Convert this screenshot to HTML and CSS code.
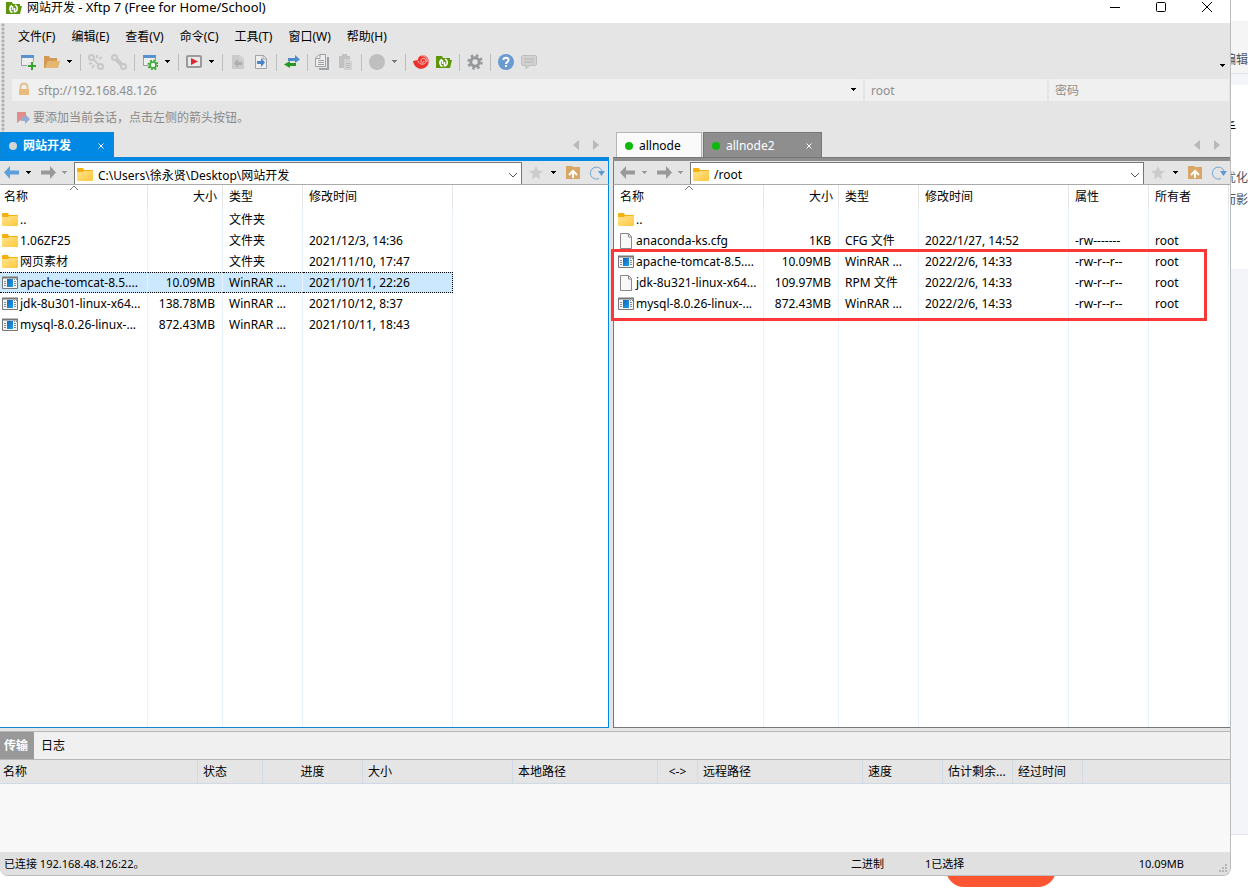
FILE: index.html
```html
<!DOCTYPE html>
<html lang="zh-CN">
<head>
<meta charset="utf-8">
<title>网站开发 - Xftp 7</title>
<link rel="stylesheet" href="styles.css">
</head>
<body>
<svg class="sprite" aria-hidden="true">
  <defs>
    <linearGradient id="gold" x1="0" y1="0" x2="1" y2="1"><stop offset="0" stop-color="#ffe391"/><stop offset="1" stop-color="#ffc83a"/></linearGradient>
    <linearGradient id="azure" x1="0" y1="0" x2="1" y2="1"><stop offset="0" stop-color="#1565b8"/><stop offset="1" stop-color="#1ba0ea"/></linearGradient>
  </defs>
  <symbol id="logo" viewBox="0 0 16 16"><path d="M0 2h6l1 2h7v10H0z" fill="#5e960b"/><path d="M14 6h2l-2 8z" fill="#5e960b"/><path d="M6.500 12.500a3.800 3.800 0 0 1-.5-7M6.500 6v4M9 12a3.800 3.800 0 0 0 0-7M8.500 8v4.500" fill="none" stroke="#fff" stroke-width="1.600"/></symbol>
  <symbol id="caret" viewBox="0 0 7 4"><path d="M1 0h5v1H5v1H4v1H3V2H2V1H1z" fill="currentColor"/></symbol>
  <symbol id="new" viewBox="0 0 16 16"><path d="M.5 1.500h12v10H.5z" fill="#eee" stroke="#999ea3"/><path d="M0 1h13v3H0z" fill="#5794cf"/><path d="M6 8h8v4H6z" fill="#e5e5e5"/><path d="M10 8h2v3h3v2h-3v3h-2v-3H7v-2h3z" fill="#35a52c"/></symbol>
  <symbol id="open" viewBox="0 0 16 16"><path d="M0 2h5l1 2h7v3H4l-2 7H0z" fill="#d29a55"/><path d="M4 7h12l-2 7H1z" fill="#e5b671"/></symbol>
  <symbol id="unlink" viewBox="0 0 16 16"><g fill="none" stroke="#c8c8c8" stroke-width="2"><circle cx="3.500" cy="3.500" r="2.500"/><circle cx="12.500" cy="12.500" r="2.500"/><path d="M5 5l3 3M8 8l3 3M9 1v3M14 3l-3 2M1 10l3-1M4 14l2-3"/></g></symbol>
  <symbol id="link" viewBox="0 0 16 16"><g fill="none" stroke="#c8c8c8" stroke-width="2"><circle cx="3.500" cy="3.500" r="2.500"/><circle cx="12.500" cy="12.500" r="2.500"/><path d="M5 5l6 6" stroke-width="4"/></g></symbol>
  <symbol id="props" viewBox="0 0 16 16"><path d="M1.500 1.500h12v10h-12z" fill="#eee" stroke="#999ea3"/><path d="M1 1h13v3H1z" fill="#5794cf"/><circle cx="11" cy="11" r="4.500" fill="#e9f3e8" stroke="#35a52c" stroke-width="2" stroke-dasharray="1.800 1.730"/><circle cx="11" cy="11" r="3" fill="#f2f8f1" stroke="#35a52c" stroke-width="1.500"/></symbol>
  <symbol id="play" viewBox="0 0 16 16"><rect x="1" y="2" width="14" height="11" rx="1" fill="#e9e9e9" stroke="#9a9a9a" stroke-width="2"/><path d="M5 4l7 3.500L5 11z" fill="#dc2632"/></symbol>
  <symbol id="pageleft" viewBox="0 0 16 16"><path d="M2 1h8l4 4v10H2z" fill="#cbcbcb"/><path d="M10 1v4h4" stroke="#ddd" fill="none"/><path d="M4 9l4-4v3h4v3H8v3z" fill="#adadad"/></symbol>
  <symbol id="pageright" viewBox="0 0 16 16"><path d="M2.500 1.500h8l3 3v10h-11z" fill="#eee" stroke="#a0a4a8"/><path d="M10 1v4h4" fill="none" stroke="#a0a4a8"/><path d="M12 8.500L8 4v3H4v3h4v3z" fill="#4386cb"/></symbol>
  <symbol id="swap" viewBox="0 0 16 16"><path d="M4 4h7V1l5 4.500L11 9V7H4z" fill="#4c8bcc"/><path d="M12 9v3H6v2l-6-3.500L6 7v2z" fill="#249a24"/></symbol>
  <symbol id="copy" viewBox="0 0 16 16"><path d="M4 15h9V3" fill="none" stroke="#9da1a5" stroke-width="2"/><path d="M4.500.5h6v12h-10V4z" fill="#eee" stroke="#9da1a5"/><path d="M1 4.500h4V1M3 6.500h6M3 8.500h6M3 10.500h6" fill="none" stroke="#9da1a5"/></symbol>
  <symbol id="paste" viewBox="0 0 16 16"><path d="M1 2h3V0h5v2h3v12H1z" fill="#c1c1c1"/><path d="M6 5h5l3 3v8H6z" fill="#d2d2d2"/><path d="M8 9.500h4M8 11.500h4M8 13.500h4" stroke="#bbb"/></symbol>
  <symbol id="disc" viewBox="0 0 16 16"><circle cx="8" cy="8" r="8" fill="#bfbfbf"/></symbol>
  <symbol id="shell" viewBox="0 0 16 16"><path d="M0 7l5-1c0-4 4-6 8-4 4 3 3 9 0 11-5 4-12 1-13-6z" fill="#ea332c"/><path d="M5 7c1 4 7 4 8 1 1-4-5-5-5-1 0 2 3 2 3 0M8 2c4-1 7 2 6 6" fill="none" stroke="#ffc9c5"/></symbol>
  <symbol id="gear" viewBox="0 0 16 16"><circle cx="8" cy="8" r="6.500" fill="none" stroke="#96999c" stroke-width="2.500" stroke-dasharray="2.550 2.550"/><circle cx="8" cy="8" r="4.200" fill="#e5e5e5" stroke="#96999c" stroke-width="3"/></symbol>
  <symbol id="help" viewBox="0 0 16 16"><circle cx="8" cy="8" r="8" fill="#699bd1"/><path d="M5.500 6c0-3 5-3 5 0 0 2-2.500 2-2.500 4M8 11v2" fill="none" stroke="#fff" stroke-width="2"/></symbol>
  <symbol id="chat" viewBox="0 0 16 16"><path d="M1.500 1.500h13l1 1v8l-1 1H9l-4 3v-3H1.500l-1-1v-8z" fill="#d1d1d1" stroke="#bdbdbd"/><path d="M3 5h10M3 8h10" stroke="#b5b5b5"/></symbol>
  <symbol id="lock" viewBox="0 0 16 16"><path d="M4.500 7V5a3.500 3.500 0 0 1 7 0v2" fill="none" stroke="#e3bf8d" stroke-width="2"/><rect x="3" y="7" width="10" height="6" rx="1" fill="#e9bb78"/></symbol>
  <symbol id="flag" viewBox="0 0 16 16"><path d="M1 2h9v10l-4-3-5 4z" fill="#df8d8d"/><path d="M5 7h4V4l5 5-5 5v-3H5z" fill="#91afd4"/></symbol>
  <symbol id="back" viewBox="0 0 16 16"><path d="M0 7.500L6 1v4.500h9v4H6V14z" fill="currentColor"/></symbol>
  <symbol id="forward" viewBox="0 0 16 16"><path d="M16 7.500L10 1v4.500H1v4h9V14z" fill="currentColor"/></symbol>
  <symbol id="folder" viewBox="0 0 16 16"><path d="M0 2q0-1 1-1h5l1 2h8q1 0 1 1v2H0z" fill="#f5b20f"/><path d="M0 5h6l1-1h8q1 0 1 1v8q0 1-1 1H1q-1 0-1-1z" fill="url(#gold)"/></symbol>
  <symbol id="archive" viewBox="0 0 16 16"><path d="M.5 2.500h15v11H.5z" fill="#f5f5f5" stroke="#777"/><path d="M0 2.500h16" stroke="#777" stroke-width="2"/><path d="M12 4.500h1M14 4.500h1M2 6.500h2M2 8.500h2M2 10.500h2M12 6.500h2M12 8.500h2M12 10.500h2" stroke="#888"/><path d="M5 4h6v8H5z" fill="url(#azure)"/></symbol>
  <symbol id="file" viewBox="0 0 16 16"><path d="M2.500.5h8l3 3v12h-11z" fill="#f8f8f8" stroke="#888"/><path d="M10.500 1v3h3" fill="none" stroke="#888"/></symbol>
  <symbol id="star" viewBox="0 0 16 16"><path d="M8 1l2 4.500 5 .5-4 3.500 1 5-4-3-4 3 1-5L1 6l5-.5z" fill="#cbcbcb"/></symbol>
  <symbol id="up" viewBox="0 0 16 16"><path d="M1 1h6l1 1h7v12H1z" fill="#d9a765"/><path d="M4 10l4-4 4 4M8 7v6" fill="none" stroke="#fff" stroke-width="2"/></symbol>
  <symbol id="refresh" viewBox="0 0 16 16"><path d="M10 13.500A6 6 0 1 1 13 6" fill="none" stroke="#6da5d8"/><path d="M9 6h7l-3.500 5z" fill="#5b9ad3"/></symbol>
  <symbol id="chevron" viewBox="0 0 10 6"><path d="M1 1l4 4 4-4" fill="none" stroke="#555"/></symbol>
  <symbol id="sort" viewBox="0 0 10 6"><path d="M1 5l4-4 4 4" fill="none" stroke="#777"/></symbol>
  <symbol id="cross" viewBox="0 0 8 8"><path d="M1.500 1.500l5 5M6.500 1.500l-5 5" fill="none" stroke="currentColor"/></symbol>
  <symbol id="tri-left" viewBox="0 0 6 10"><path d="M6 0v10L0 5z" fill="#b9b9b9"/></symbol>
  <symbol id="tri-right" viewBox="0 0 6 10"><path d="M0 0v10l6-5z" fill="#b9b9b9"/></symbol>
</svg>

<div class="desk">
  <div class="backdrop" aria-hidden="true">
    <div class="backdrop-bar">编辑</div>
    <div class="backdrop-band"></div>
    <div class="backdrop-text"><p class="cut">手</p><p class="lead">优化</p><p>而影</p></div>
    <div class="backdrop-card"></div>
    <div class="backdrop-pill"></div>
  </div>

  <main class="window">
    <header class="titlebar">
      <svg class="icon"><use href="#logo"/></svg>
      <h1 class="title">网站开发 <span class="product">- Xftp 7 (Free for Home/School)</span></h1>
      <div class="window-buttons">
        <button class="plain" aria-label="最小化"><svg class="win-icon" viewBox="0 0 12 12"><path d="M1 6.500h10" stroke="#000"/></svg></button>
        <button class="plain" aria-label="最大化"><svg class="win-icon" viewBox="0 0 12 12"><rect x="1.500" y="1.500" width="9" height="9" rx="1" fill="none" stroke="#000"/></svg></button>
        <button class="plain" aria-label="关闭"><svg class="win-icon" viewBox="0 0 12 12"><path d="M1 1l10 10M11 1L1 11" stroke="#000"/></svg></button>
      </div>
    </header>

    <div class="chrome">
      <nav class="menubar">
        <button class="plain">文件(F)</button><button class="plain">编辑(E)</button><button class="plain">查看(V)</button><button class="plain">命令(C)</button><button class="plain">工具(T)</button><button class="plain">窗口(W)</button><button class="plain">帮助(H)</button>
      </nav>
      <div class="toolbar">
        <button class="plain" aria-label="新建"><svg class="icon"><use href="#new"/></svg></button>
        <button class="plain" aria-label="打开"><svg class="icon"><use href="#open"/></svg></button>
        <button class="plain drop" aria-label="打开选项"><svg class="caret"><use href="#caret"/></svg></button>
        <span class="sep"></span>
        <button class="plain" aria-label="断开"><svg class="icon"><use href="#unlink"/></svg></button>
        <button class="plain" aria-label="重新连接"><svg class="icon"><use href="#link"/></svg></button>
        <span class="sep"></span>
        <button class="plain" aria-label="属性"><svg class="icon"><use href="#props"/></svg></button>
        <button class="plain drop" aria-label="属性选项"><svg class="caret"><use href="#caret"/></svg></button>
        <span class="sep"></span>
        <button class="plain" aria-label="运行"><svg class="icon"><use href="#play"/></svg></button>
        <button class="plain drop" aria-label="运行选项"><svg class="caret"><use href="#caret"/></svg></button>
        <span class="sep"></span>
        <button class="plain" aria-label="下载"><svg class="icon"><use href="#pageleft"/></svg></button>
        <button class="plain" aria-label="上传"><svg class="icon"><use href="#pageright"/></svg></button>
        <span class="sep"></span>
        <button class="plain" aria-label="同步"><svg class="icon"><use href="#swap"/></svg></button>
        <span class="sep"></span>
        <button class="plain" aria-label="复制"><svg class="icon"><use href="#copy"/></svg></button>
        <button class="plain" aria-label="粘贴"><svg class="icon"><use href="#paste"/></svg></button>
        <span class="sep"></span>
        <button class="plain" aria-label="编码"><svg class="icon"><use href="#disc"/></svg></button>
        <button class="plain drop muted" aria-label="编码选项"><svg class="caret"><use href="#caret"/></svg></button>
        <span class="sep"></span>
        <button class="plain" aria-label="Xshell"><svg class="icon"><use href="#shell"/></svg></button>
        <button class="plain" aria-label="Xftp"><svg class="icon"><use href="#logo"/></svg></button>
        <span class="sep"></span>
        <button class="plain" aria-label="选项"><svg class="icon"><use href="#gear"/></svg></button>
        <span class="sep"></span>
        <button class="plain" aria-label="帮助"><svg class="icon"><use href="#help"/></svg></button>
        <button class="plain" aria-label="反馈"><svg class="icon"><use href="#chat"/></svg></button>
        <button class="plain overflow" aria-label="更多按钮"><svg class="caret"><use href="#caret"/></svg></button>
      </div>
      <form class="address">
        <div class="field host"><svg class="icon"><use href="#lock"/></svg><input aria-label="主机" value="sftp://192.168.48.126"><button type="button" class="plain" aria-label="历史记录"><svg class="caret"><use href="#caret"/></svg></button></div>
        <div class="field"><input aria-label="用户名" value="root"></div>
        <div class="field"><input aria-label="密码" placeholder="密码"></div>
      </form>
      <div class="hint"><svg class="icon"><use href="#flag"/></svg><span>要添加当前会话，点击左侧的箭头按钮。</span></div>
    </div>

    <div class="panes">
      <section class="pane local">
        <div class="tabs">
          <button class="tab current"><i class="dot"></i><b>网站开发</b><svg class="cross"><use href="#cross"/></svg></button>
          <span class="scrollers"><svg class="tri"><use href="#tri-left"/></svg><svg class="tri"><use href="#tri-right"/></svg></span>
        </div>
        <div class="pathbar">
          <div class="nav">
            <button class="plain blue" aria-label="后退"><svg class="icon"><use href="#back"/></svg></button><button class="plain" aria-label="后退记录"><svg class="caret"><use href="#caret"/></svg></button>
            <button class="plain grey" aria-label="前进"><svg class="icon"><use href="#forward"/></svg></button><button class="plain grey" aria-label="前进记录"><svg class="caret"><use href="#caret"/></svg></button>
          </div>
          <div class="path"><svg class="icon"><use href="#folder"/></svg><input aria-label="本地路径" value="C:\Users\徐永贤\Desktop\网站开发"><svg class="chevron"><use href="#chevron"/></svg></div>
          <div class="path-tools">
            <button class="plain" aria-label="收藏"><svg class="icon"><use href="#star"/></svg></button><button class="plain" aria-label="收藏夹"><svg class="caret"><use href="#caret"/></svg></button>
            <button class="plain" aria-label="上级目录"><svg class="icon"><use href="#up"/></svg></button><button class="plain" aria-label="刷新"><svg class="icon"><use href="#refresh"/></svg></button>
          </div>
        </div>
        <div class="listing">
          <svg class="sort"><use href="#sort"/></svg>
          <table class="files">
            <colgroup><col class="c-name"><col class="c-size"><col class="c-type"><col class="c-date"><col></colgroup>
            <thead><tr><th>名称</th><th class="size">大小</th><th>类型</th><th>修改时间</th><th></th></tr></thead>
            <tbody>
              <tr><td class="name"><span><svg class="icon"><use href="#folder"/></svg>..</span></td><td class="size"></td><td>文件夹</td><td></td><td></td></tr>
              <tr><td class="name"><span><svg class="icon"><use href="#folder"/></svg>1.06ZF25</span></td><td class="size"></td><td>文件夹</td><td>2021/12/3, 14:36</td><td></td></tr>
              <tr><td class="name"><span><svg class="icon"><use href="#folder"/></svg>网页素材</span></td><td class="size"></td><td>文件夹</td><td>2021/11/10, 17:47</td><td></td></tr>
              <tr class="selected"><td class="name"><span><svg class="icon"><use href="#archive"/></svg>apache-tomcat-8.5....</span></td><td class="size">10.09MB</td><td>WinRAR ...</td><td>2021/10/11, 22:26</td><td></td></tr>
              <tr><td class="name"><span><svg class="icon"><use href="#archive"/></svg>jdk-8u301-linux-x64...</span></td><td class="size">138.78MB</td><td>WinRAR ...</td><td>2021/10/12, 8:37</td><td></td></tr>
              <tr><td class="name"><span><svg class="icon"><use href="#archive"/></svg>mysql-8.0.26-linux-...</span></td><td class="size">872.43MB</td><td>WinRAR ...</td><td>2021/10/11, 18:43</td><td></td></tr>
              <tr class="rest"><td></td><td></td><td></td><td></td><td></td></tr>
            </tbody>
          </table>
        </div>
      </section>

      <section class="pane remote">
        <div class="tabs">
          <button class="tab idle"><i class="dot"></i><span>allnode</span></button>
          <button class="tab current"><i class="dot"></i><span>allnode2</span><svg class="cross"><use href="#cross"/></svg></button>
          <span class="scrollers"><svg class="tri"><use href="#tri-left"/></svg><svg class="tri"><use href="#tri-right"/></svg></span>
        </div>
        <div class="pathbar">
          <div class="nav">
            <button class="plain grey" aria-label="后退"><svg class="icon"><use href="#back"/></svg></button><button class="plain grey" aria-label="后退记录"><svg class="caret"><use href="#caret"/></svg></button>
            <button class="plain grey" aria-label="前进"><svg class="icon"><use href="#forward"/></svg></button><button class="plain grey" aria-label="前进记录"><svg class="caret"><use href="#caret"/></svg></button>
          </div>
          <div class="path"><svg class="icon"><use href="#folder"/></svg><input aria-label="远程路径" value="/root"><svg class="chevron"><use href="#chevron"/></svg></div>
          <div class="path-tools">
            <button class="plain" aria-label="收藏"><svg class="icon"><use href="#star"/></svg></button><button class="plain" aria-label="收藏夹"><svg class="caret"><use href="#caret"/></svg></button>
            <button class="plain" aria-label="上级目录"><svg class="icon"><use href="#up"/></svg></button><button class="plain" aria-label="刷新"><svg class="icon"><use href="#refresh"/></svg></button>
          </div>
        </div>
        <div class="listing">
          <svg class="sort"><use href="#sort"/></svg>
          <table class="files">
            <colgroup><col class="c-name"><col class="c-size"><col class="c-type"><col class="c-date"><col class="c-attr"><col class="c-attr"><col></colgroup>
            <thead><tr><th>名称</th><th class="size">大小</th><th>类型</th><th>修改时间</th><th>属性</th><th>所有者</th><th></th></tr></thead>
            <tbody>
              <tr><td class="name"><span><svg class="icon"><use href="#folder"/></svg>..</span></td><td class="size"></td><td></td><td></td><td></td><td></td><td></td></tr>
              <tr><td class="name"><span><svg class="icon"><use href="#file"/></svg>anaconda-ks.cfg</span></td><td class="size">1KB</td><td>CFG 文件</td><td>2022/1/27, 14:52</td><td>-rw-------</td><td>root</td><td></td></tr>
              <tr><td class="name"><span><svg class="icon"><use href="#archive"/></svg>apache-tomcat-8.5....</span></td><td class="size">10.09MB</td><td>WinRAR ...</td><td>2022/2/6, 14:33</td><td>-rw-r--r--</td><td>root</td><td></td></tr>
              <tr><td class="name"><span><svg class="icon"><use href="#file"/></svg>jdk-8u321-linux-x64...</span></td><td class="size">109.97MB</td><td>RPM 文件</td><td>2022/2/6, 14:33</td><td>-rw-r--r--</td><td>root</td><td></td></tr>
              <tr><td class="name"><span><svg class="icon"><use href="#archive"/></svg>mysql-8.0.26-linux-...</span></td><td class="size">872.43MB</td><td>WinRAR ...</td><td>2022/2/6, 14:33</td><td>-rw-r--r--</td><td>root</td><td></td></tr>
              <tr class="rest"><td></td><td></td><td></td><td></td><td></td><td></td><td></td></tr>
            </tbody>
          </table>
          <div class="marker"></div>
        </div>
      </section>
    </div>

    <section class="transfers">
      <div class="log-tabs"><button class="log-tab on">传输</button><button class="log-tab">日志</button></div>
      <table class="queue">
        <colgroup><col class="q-name"><col class="q-state"><col class="q-progress"><col class="q-size"><col class="q-local"><col class="q-way"><col class="q-remote"><col class="q-speed"><col class="q-time"><col class="q-time"><col></colgroup>
        <thead><tr><th>名称</th><th>状态</th><th class="mid">进度</th><th>大小</th><th>本地路径</th><th class="mid">&lt;-&gt;</th><th>远程路径</th><th>速度</th><th>估计剩余...</th><th>经过时间</th><th></th></tr></thead>
      </table>
      <div class="queue-body"></div>
    </section>

    <footer class="status"><span class="s-main">已连接 192.168.48.126:22。</span><span class="s-mode">二进制</span><span class="s-pick">1已选择</span><span class="s-total">10.09MB</span><svg class="grip" viewBox="0 0 9 9"><path d="M7 1h2M4 4h2M7 4h2M1 7h2M4 7h2M7 7h2" stroke="#b5b5b5" stroke-width="2"/></svg></footer>
  </main>
</div>
</body>
</html>
```

FILE: styles.css
```css
* { box-sizing: border-box; }

body {
  margin: 0;
  background: #fff;
  color: #000;
  font: 12px/16px "Noto Sans", "Noto Sans CJK SC", sans-serif;
}

button, input { font: inherit; color: inherit; }

svg { display: block; flex: none; }

.sprite { position: absolute; width: 0; height: 0; }
.icon { width: 16px; height: 16px; }
.caret { width: 7px; height: 4px; }
.chevron, .sort { width: 10px; height: 6px; }
.cross { width: 8px; height: 8px; }

.plain {
  flex: none;
  display: block;
  margin: 0;
  padding: 0;
  border: 0;
  background: none;
}

.desk {
  position: relative;
  height: 100vh;
  padding: 0 17px 15px 0;
  overflow: hidden;
}

/* Page behind the window */
.backdrop {
  position: absolute;
  inset: 0;
  display: flex;
  flex-direction: column;
  align-items: flex-end;
  color: #4d4f5c;
  line-height: 22px;
}
.backdrop > * { width: 24px; white-space: nowrap; }
.backdrop-bar {
  height: 53px;
  margin-top: 21px;
  padding-top: 28px;
  border-bottom: 1px solid #e3e3e6;
  background: #f5f5f5;
}
.backdrop-band { height: 11px; background: #f4f5f8; }
.backdrop-text { height: 184px; padding-top: 32px; }
.backdrop-text p { margin: 0; }
.backdrop-text .cut { color: #000; }
.backdrop-text .lead { margin-top: 28px; }
.backdrop-card {
  height: 566px;
  background: #f4f5f8;
  border-bottom: 1px solid #e3e3e6;
}
.backdrop > .backdrop-pill {
  position: absolute;
  right: 192px;
  bottom: 4px;
  width: 110px;
  height: 36px;
  border-radius: 18px;
  background: #fc5531;
}

.window {
  position: relative;
  display: flex;
  flex-direction: column;
  height: 100%;
  overflow: hidden;
  border: solid #bdbdbd;
  border-width: 0 1px 1px 0;
  border-radius: 0 0 8px 8px;
  background: #e5e5e5;
}

.titlebar {
  display: flex;
  align-items: flex-start;
  gap: 5px;
  height: 23px;
  padding-left: 6px;
  background: #fff;
}
.title { flex: 1; margin: 0; font-size: 12px; font-weight: 400; line-height: 14px; }
.product { font-size: 13px; }
.window-buttons { display: flex; gap: 34px; padding: 1px 17px 0 0; }
.win-icon { width: 12px; height: 12px; }

.chrome {
  padding-left: 12px;
  background: radial-gradient(circle, #b0b0b0 1px, transparent 2px) 1px 0 / 4px 4px repeat-y;
}
.menubar { display: flex; gap: 16px; height: 24px; padding: 3px 0 0 6px; }

.toolbar {
  display: flex;
  align-items: center;
  gap: 7px;
  height: 30px;
  padding-left: 9px;
}
.toolbar .drop { margin-left: -1px; }
.toolbar .muted { color: #777; }
.toolbar .overflow { align-self: flex-end; margin: 0 4px 9px auto; }
.sep { width: 1px; height: 17px; background: #bdbdbd; }

.address {
  display: grid;
  grid-template-columns: 851fr 182fr 180fr;
  gap: 2px;
  height: 24px;
  padding: 2px 1px 0 0;
  color: #8e8e8e;
}
.field {
  display: flex;
  align-items: center;
  min-width: 0;
  padding: 0 6px;
  background: #f0f0f0;
}
.host { gap: 6px; padding: 0 6px 0 4px; }
.host button { color: #000; }
.field input, .path input {
  flex: 1;
  min-width: 0;
  height: 20px;
  padding: 0;
  border: 0;
  outline: 0;
  background: transparent;
}
.field input::placeholder { color: #8e8e8e; }
.hint {
  display: flex;
  align-items: center;
  gap: 1px;
  height: 31px;
  padding: 2px 0 0 4px;
  color: #8a8a8a;
}

.panes { flex: 1; display: flex; gap: 4px; min-height: 0; }
.pane { display: flex; flex-direction: column; min-width: 0; }
.local { flex: 609 1 0; --edge: #0e86d4; --fill: #0089e4; }
.remote { flex: 617 1 0; --edge: #777; --fill: #8e8e8e; }

.tabs {
  display: flex;
  gap: 1px;
  height: 29px;
  padding-bottom: 4px;
  background: linear-gradient(var(--edge), var(--edge)) 0 25px / 100% 1px no-repeat,
    linear-gradient(var(--fill), var(--fill)) 0 26px / 100% 3px no-repeat;
}
.remote .tabs { padding-left: 3px; }
.tab {
  display: flex;
  align-items: center;
  gap: 6px;
  padding: 2px 8px 0;
  border: 0;
  white-space: nowrap;
}
.tab.current {
  width: 119px;
  border: solid var(--edge);
  border-width: 1px 1px 0;
  background: var(--fill);
  color: #fff;
}
.local .tab.current { width: 114px; }
.tab.idle {
  width: 86px;
  border: solid #b5b5b5;
  border-width: 1px 1px 0;
  background: #fafafa;
}
.tab .cross { margin-left: auto; }
.dot { flex: none; width: 8px; height: 8px; border-radius: 50%; background: #0cb90c; }
.local .dot { background: #d5d5d5; }
.scrollers { display: flex; align-items: center; gap: 14px; margin-left: auto; padding-right: 10px; }
.tri { width: 6px; height: 10px; }

.pathbar {
  display: flex;
  align-items: center;
  gap: 6px;
  height: 24px;
  padding-left: 4px;
  border-bottom: 1px solid #aaa;
}
.local .pathbar { border-right: 1px solid var(--fill); }
.remote .pathbar { border-left: 1px solid var(--edge); padding-left: 6px; }
.nav { display: flex; align-items: center; gap: 5px; }
.nav .plain:nth-child(3) { margin-left: 3px; }
.blue { color: #5d9fda; }
.grey { color: #999; }
.path {
  flex: 1;
  display: flex;
  align-items: center;
  gap: 5px;
  min-width: 0;
  height: 22px;
  margin-top: 1px;
  padding: 2px 3px 0 2px;
  border: solid #777;
  border-width: 1px 1px 0;
  background: #fff;
}
.path-tools { display: flex; align-items: center; gap: 8px; padding-right: 3px; }
.path-tools .plain:nth-child(2) { margin-left: -2px; }

.listing { position: relative; flex: 1; min-height: 0; background: #fff; border-bottom: 1px solid var(--edge); }
.local .listing { border-right: 1px solid var(--fill); }
.remote .listing { border-left: 1px solid var(--edge); }
.sort { position: absolute; top: 0; left: 69px; }
.remote .sort { left: 70px; }

.files, .queue { width: 100%; border-collapse: separate; border-spacing: 0; table-layout: fixed; }
.files { height: 100%; }
.c-name { width: 148px; }
.remote .c-name { width: 150px; }
.c-size { width: 75px; }
.c-type, .c-attr { width: 80px; }
.c-date { width: 150px; }
th, td { padding: 0 6px; text-align: left; font-weight: 400; white-space: nowrap; }
th:not(:last-child) { border-right: 1px solid #e5e5e5; }
td:not(:last-child) { border-right: 1px solid #e8f1fc; }
.files th { height: 24px; }
.files th:first-child { padding-left: 4px; }
.files td { height: 21px; }
.files .size { padding: 0 7px 0 0; text-align: right; }
.files th.size { padding-right: 5px; }
.files .name { padding: 0 0 0 2px; }
.remote .files th:first-child { padding-left: 6px; }
.remote .files .name { padding-left: 4px; }
.name span { display: flex; align-items: center; gap: 2px; }
.files .rest td { height: auto; }
.selected td:not(:last-child) {
  border-top: 1px dotted #000;
  border-bottom: 1px dotted #000;
  background: #cce8ff;
}
.selected td:nth-child(4) { border-right: 1px dotted #000; }

.marker {
  position: absolute;
  top: 64px;
  left: -3px;
  width: 596px;
  height: 72px;
  border: 3px solid #fb3838;
}

.transfers { margin-top: 3px; border-top: 1px solid #b5b8b6; background: #f8f8f8; }
.log-tabs { display: flex; height: 28px; border-bottom: 1px solid #b5b8b6; background: #f0f0f0; }
.log-tab { padding: 0 7px; border: 0; background: none; }
.log-tab.on { width: 34px; padding: 0 0 0 4px; background: #999; color: #fff; font-weight: 700; text-align: left; }
.queue { background: #e5e5e5; }
.queue th { height: 24px; padding: 0 5px; border-bottom: 1px solid #d0dae6; }
.queue th:first-child { padding-left: 3px; }
.queue th:not(:last-child) { border-right: 1px solid #d0dae6; }
.queue .mid { text-align: center; }
.q-name { width: 198px; }
.q-state { width: 65px; }
.q-progress { width: 100px; }
.q-size { width: 150px; }
.q-local { width: 145px; }
.q-way { width: 40px; }
.q-remote { width: 165px; }
.q-speed { width: 80px; }
.q-time { width: 70px; }
.queue-body { height: 68px; }

.status {
  display: flex;
  align-items: center;
  height: 23px;
  padding: 0 3px 0 4px;
  background: #e0e0e0;
  font-size: 11px;
}
.s-main { flex: 1; }
.s-mode { width: 74px; }
.s-pick { width: 160px; }
.s-total { width: 99px; text-align: right; }
.grip { width: 9px; height: 9px; margin: 9px 0 0 34px; }
```
